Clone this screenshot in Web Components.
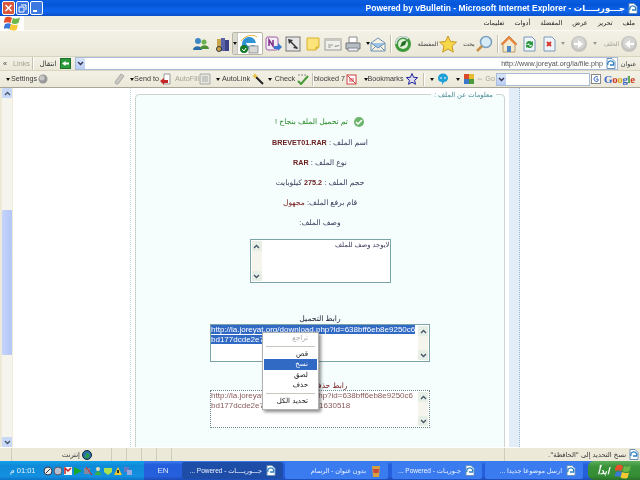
<!DOCTYPE html>
<html lang="ar">
<head>
<meta charset="utf-8">
<title>Powered by vBulletin</title>
<style>
  html, body { margin: 0; height: 100%; overflow: hidden; background: #ece9d8; }
  body { display: flex; flex-direction: column; width: 640px; height: 480px; filter: blur(.3px);
         font: 7.2px "Liberation Sans", "DejaVu Sans", sans-serif; color: #333; }
</style>
</head>
<body>
<win-title></win-title>
<menu-row></menu-row>

<tool-row h="25">
  <x-icon name="msn" size="18" style="margin-left:192px"></x-icon>
  <x-icon name="notes" size="16" style="margin-left:5px"></x-icon>
  <hot-button style="margin-left:1px"><x-icon name="iedit" size="20"></x-icon></hot-button>
  <x-icon name="onenote" size="18" style="margin-left:1px"></x-icon>
  <x-icon name="arrows" size="16" style="margin-left:3px"></x-icon>
  <x-icon name="sticky" size="16" style="margin-left:4px"></x-icon>
  <x-icon name="card" size="18" style="margin-left:3px"></x-icon>
  <x-icon name="printer" size="18" style="margin-left:2px"></x-icon>
  <drop-arrow style="margin-left:4px"></drop-arrow>
  <x-icon name="mail" size="16"></x-icon>
  <tool-sep h="18" style="margin-left:4px"></tool-sep>
  <x-icon name="compass" size="18" style="margin-left:2px"></x-icon>
  <tool-label w="20" style="margin-left:6px;font-size:6px">المفضلة</tool-label>
  <x-icon name="star" size="18" style="margin-left:1px"></x-icon>
  <tool-label w="12" style="margin-left:6px;font-size:6px">بحث</tool-label>
  <x-icon name="search" size="18"></x-icon>
  <tool-sep h="18" style="margin-left:4px"></tool-sep>
  <x-icon name="home" size="18" style="margin-left:1px"></x-icon>
  <x-icon name="refresh" size="16" style="margin-left:3px"></x-icon>
  <x-icon name="stop" size="16" style="margin-left:4px"></x-icon>
  <drop-arrow gray style="margin-left:4px"></drop-arrow>
  <x-icon name="forward" size="18" style="margin-left:5px"></x-icon>
  <drop-arrow gray style="margin-left:5px"></drop-arrow>
  <tool-label w="15" gray style="margin-left:7px;font-size:6px">الخلف</tool-label>
  <x-icon name="back" size="18" style="margin-left:1px"></x-icon>
</tool-row>

<tool-row h="14" line>
  <tool-label w="6" style="margin-left:2px">«</tool-label>
  <tool-label w="17" gray style="margin-left:5px">Links</tool-label>
  <tool-sep h="13" style="margin-left:2px"></tool-sep>
  <tool-label w="16" style="margin-left:6px">انتقال</tool-label>
  <x-icon name="go" size="11" style="margin-left:4px"></x-icon>
  <combo-box w="543" style="margin-left:4px"><span>http://www.joreyat.org/la/file.php</span><x-icon name="page" size="11" slot="end" style="margin-left:2px"></x-icon></combo-box>
  <tool-label w="15" style="margin-left:3px;font-size:6.400px">عنوان</tool-label>
</tool-row>

<tool-row h="17" line>
  <drop-arrow style="margin-left:6px"></drop-arrow>
  <tool-label w="24" style="margin-left:2px">Settings</tool-label>
  <x-icon name="ball" size="10" style="margin-left:2px"></x-icon>
  <x-icon name="eraser" size="12" style="margin-left:65px"></x-icon>
  <drop-arrow style="margin-left:5px"></drop-arrow>
  <tool-label w="23" style="margin-left:1px">Send to</tool-label>
  <x-icon name="sendto" size="12" style="margin-left:2px"></x-icon>
  <tool-label w="22" gray style="margin-left:4px">AutoFill</tool-label>
  <x-icon name="autofill" size="12" style="margin-left:1px"></x-icon>
  <drop-arrow style="margin-left:5px"></drop-arrow>
  <tool-label w="26" style="margin-left:3px">AutoLink</tool-label>
  <x-icon name="wand" size="12" style="margin-left:3px"></x-icon>
  <drop-arrow style="margin-left:4px"></drop-arrow>
  <tool-label w="20" style="margin-left:3px">Check</tool-label>
  <x-icon name="abc" size="12" style="margin-left:2px"></x-icon>
  <tool-sep h="13" style="margin-left:3px"></tool-sep>
  <tool-label w="27" style="margin-left:2px">blocked 7</tool-label>
  <x-icon name="blocked" size="11" style="margin-left:3px"></x-icon>
  <drop-arrow style="margin-left:7px"></drop-arrow>
  <tool-label w="33" style="margin-left:1px">Bookmarks</tool-label>
  <x-icon name="outline-star" size="12" style="margin-left:4px"></x-icon>
  <tool-sep h="13" style="margin-left:5px"></tool-sep>
  <drop-arrow style="margin-left:5px"></drop-arrow>
  <x-icon name="bubble" size="12" style="margin-left:3px"></x-icon>
  <drop-arrow style="margin-left:7px"></drop-arrow>
  <x-icon name="puzzle" size="12" style="margin-left:3px"></x-icon>
  <tool-label w="15" gray style="margin-left:3px">⇔ Go</tool-label>
  <combo-box w="94" style="margin-left:3px"></combo-box>
  <x-icon name="gbox" size="10" style="margin-left:1px"></x-icon>
  <google-mark style="margin-left:3px"></google-mark>
</tool-row>

<browser-page>
  <file-info></file-info>
  <context-menu></context-menu>
</browser-page>

<status-row></status-row>
<task-bar></task-bar>

<script>
const ICONS = {
  msn: '<circle cx="6" cy="6" r="3" fill="#3f87c4"/><path d="M1 15c0-5 9-5 9 0z" fill="#2a6ca8"/><circle cx="12" cy="7" r="2.5" fill="#6cb04c"/><path d="M8 14c0-5 9-5 9 0z" fill="#4c9036"/>',
  notes: '<rect x="2" y="3" width="4" height="12" fill="#c9a64e"/><rect x="6" y="2" width="4" height="13" fill="#5a63a8"/><rect x="10" y="4" width="4" height="11" fill="#3c4488"/><circle cx="4" cy="13" r="2.5" fill="none" stroke="#333"/>',
  iedit: '<path d="M3 11a7 7 0 0 1 14-2H7a3.500 3.500 0 0 0 6 2h3a7 7 0 0 1-13 0" fill="#2f93d6"/><path d="M2 7c4-6 13-7 16-4" fill="none" stroke="#f0b030" stroke-width="1"/><rect x="10" y="12" width="9" height="7" fill="#d8d8d8" stroke="#999"/><circle cx="5" cy="15" r="4" fill="#187a28"/><path d="M3 15l2 2 2-3" stroke="#fff" fill="none"/>',
  onenote: '<rect x="2" y="2" width="12" height="13" rx="2" fill="#f2ecf4" stroke="#a060a8"/><path d="M5 11V5l4 6V5" stroke="#80308a" stroke-width="1.500" fill="none"/><path d="M10 11h4V8l4 4-4 4v-2h-4z" fill="#3878d0"/>',
  arrows: '<rect x="1" y="1" width="14" height="14" fill="#e6e6e6" stroke="#777"/><path d="M3 3l5 1-1.500 1.500L13 12l-1 1-6.500-6.500L4 8z" fill="#333"/><path d="M13 13l-5-1 1.500-1.500z" fill="#333"/>',
  sticky: '<path d="M2 2h12v9l-3 3H2z" fill="#fce47a" stroke="#d8b030"/><path d="M11 14v-3h3" fill="#e8c84a" stroke="#d8b030"/>',
  card: '<rect x="1" y="4" width="16" height="11" fill="#f0f0ea" stroke="#999"/><rect x="1" y="4" width="16" height="2" fill="#c8c8c0"/><path d="M4 10h5M4 12h3" stroke="#999"/><path d="M11 12c1-3 2 1 4-2" stroke="#777" fill="none"/>',
  printer: '<path d="M5 2h8v6H5z" fill="#fff" stroke="#888"/><path d="M2 8h14v6H2z" fill="#b4bcc4" stroke="#777"/><path d="M4 13h10v3H4z" fill="#eef" stroke="#888"/>',
  mail: '<path d="M1 7l7-5 7 5v8H1z" fill="#f7f3e0" stroke="#6a90b8"/><path d="M1 7l7 5 7-5" fill="#9cc4e8" stroke="#6a90b8"/><path d="M1 15l5-5M15 15l-5-5" stroke="#6a90b8"/>',
  compass: '<circle cx="9" cy="9" r="8" fill="#3e9a3a"/><circle cx="9" cy="9" r="5" fill="#dff0d8"/><path d="M6 12l2-5 5-2-2 5z" fill="#246c24"/><path d="M2 9a7 7 0 0 1 12-5" fill="none" stroke="#dde" stroke-width="1.500"/>',
  star: '<path d="M9 1l2.500 5.500 6 .6-4.500 4 1.300 6L9 14l-5.300 3.100 1.300-6-4.500-4 6-.6z" fill="#f6d84a" stroke="#c89a20"/>',
  search: '<circle cx="11" cy="7" r="5.500" fill="#d8ecf8" stroke="#7aa0c0" stroke-width="1.500"/><path d="M7 11l-5 5" stroke="#c89048" stroke-width="2.500"/>',
  home: '<path d="M9 1L1 9l2 1v7h12v-7l2-1z" fill="#f4ead0" stroke="#b89868"/><path d="M9 1L1 9l2 1 6-6 6 6 2-1z" fill="#e8843c"/><rect x="7" y="11" width="4" height="6" fill="#4a88c8"/>',
  refresh: '<path d="M3 1h8l3 3v11H3z" fill="#eef4fa" stroke="#7a98b8"/><path d="M5 8a3.500 3.500 0 0 1 6-2l1-1v4H8l1-1a2 2 0 0 0-3 1zM12 9a3.500 3.500 0 0 1-6 2l-1 1V9h4l-1 1a2 2 0 0 0 3-1z" fill="#2c9a3c"/>',
  stop: '<path d="M3 1h8l3 3v11H3z" fill="#eef4fa" stroke="#7a98b8"/><path d="M6 6l4 4M10 6l-4 4" stroke="#d8342c" stroke-width="2"/>',
  forward: '<circle cx="9" cy="9" r="8" fill="#c4c4c0"/><circle cx="9" cy="8" r="6" fill="#d6d6d2"/><path d="M4 8h4V5l5 4-5 4v-3H4z" fill="#fff"/>',
  back: '<circle cx="9" cy="9" r="8" fill="#c4c4c0"/><circle cx="9" cy="8" r="6" fill="#d6d6d2"/><path d="M14 8h-4V5L5 9l5 4v-3h4z" fill="#fff"/>',
  go: '<rect x=".5" y=".5" width="10" height="10" fill="#2a9a3a" stroke="#1a7028"/><path d="M9 4.500H5.500V3L2 5.500 5.500 8V6.500H9z" fill="#fff"/>',
  page: '<path d="M2 .5h5l3 3v7H2z" fill="#fff" stroke="#6a90b8"/><path d="M3 7a3 3 0 1 1 5.500 0H5" fill="none" stroke="#2b7fc4" stroke-width="1.300"/>',
  ball: '<circle cx="5" cy="5" r="4.500" fill="#999"/><circle cx="4" cy="4" r="2.500" fill="#c8c8c8"/>',
  eraser: '<path d="M2 9l6-8 3 2-6 8H3z" fill="#c8c8c0" stroke="#aaa"/>',
  sendto: '<path d="M4 1h6v10H4z" fill="#fff" stroke="#999"/><path d="M0 8l4-3v2h4v3H4v2z" fill="#c42828"/>',
  autofill: '<path d="M1 1h10v10H1z" fill="#e6e6e0" stroke="#aaa"/><path d="M3 4h6M3 6h6M3 8h6" stroke="#aaa"/>',
  wand: '<path d="M4 4l7 7" stroke="#222" stroke-width="2"/><path d="M3 0l1 2 2 1-2 1-1 2-1-2-2-1 2-1z" fill="#e8c040"/>',
  abc: '<path d="M1 8l3 3 7-8" stroke="#4a9a3a" stroke-width="2" fill="none"/><path d="M1 2h9" stroke="#888" stroke-dasharray="2 1"/>',
  blocked: '<rect x="1" y="1" width="9" height="9" fill="#fff" stroke="#c44"/><path d="M1 1l9 9M3 5h5M3 7h5" stroke="#c44"/>',
  'outline-star': '<path d="M6 .5l1.600 3.800 4 .3-3 2.700.9 4L6 9.200 2.500 11.300l.9-4-3-2.700 4-.3z" fill="#dde" stroke="#22229a"/>',
  bubble: '<path d="M1 5a5 4.500 0 0 1 10 0c0 3-2.500 4-4 4L5 12V9C3 9 1 8 1 5z" fill="#1fa0d8"/><path d="M4 4v2M8 4v2" stroke="#fff"/>',
  puzzle: '<rect x="1" y="1" width="5" height="5" fill="#d84a2a"/><rect x="6" y="1" width="5" height="5" fill="#e8b830"/><rect x="1" y="6" width="5" height="5" fill="#3c78c8"/><rect x="6" y="6" width="5" height="5" fill="#4a9a3a"/>',
  gbox: '<rect x=".5" y=".5" width="9" height="9" fill="#fff" stroke="#888"/><path d="M7 3a2.500 2.500 0 1 0 0 4V5H5" fill="none" stroke="#3a6ac8"/>',
  check: '<circle cx="6" cy="6" r="5" fill="#6db56d"/><path d="M3 6l2 2 4-4" stroke="#fff" stroke-width="1.500" fill="none"/>',
  globe: '<circle cx="5" cy="5" r="4.500" fill="#2a70b0"/><path d="M2 3c3-1 3 2 1 3s1 3 3 2 2-4 0-5" fill="#2a9a48"/><circle cx="5" cy="5" r="4.500" fill="none" stroke="#123"/>',
  xp: '<path d="M1 3c3-2 5-1 7 0l-1.500 5c-2-1-4-1-7 0z" fill="#e8502c"/><path d="M9 3c2 1 4 1 7-.5L14.500 8c-3 1.500-5 1-7 0z" fill="#6cb84a"/><path d="M0 9c3-1 4-1 6 0l-1.500 5c-2-1-4-1-6 0z" fill="#3a78d8" transform="translate(1 0)"/><path d="M7 9c2 1 4 1.500 7 .5L12.500 15c-3 1-5 .5-7-.5z" fill="#f6c834"/>',
  paint: '<path d="M3 1h8l-1 11H4z" fill="#d4a040"/><path d="M4 4h6l-.5 4h-5z" fill="#c84a3a"/>',
  t1: '<circle cx="5" cy="5" r="4" fill="#e8e8e8" stroke="#334"/><path d="M3 7l4-4" stroke="#334"/>',
  t2: '<circle cx="5" cy="5" r="4" fill="#b8c0d0" stroke="#556"/>',
  t3: '<rect x="1" y="1" width="8" height="8" fill="#f4f4f4"/><path d="M2 8V2l3 3 3-3" stroke="#c22" stroke-width="1.500" fill="none"/>',
  t4: '<path d="M1 1l8 4-8 4z" fill="#18a828"/>',
  t5: '<rect x="1" y="2" width="6" height="6" fill="#889" /><path d="M3 1l6 8" stroke="#c22"/>',
  t6: '<circle cx="5" cy="3" r="2" fill="#e8e0b0"/><path d="M2 9c0-5 6-5 6 0z" fill="#38b048"/>',
  t7: '<path d="M1 2h8v4l-4 3-4-3z" fill="#a8e050"/>',
  t8: '<path d="M5 1l4 8H1z" fill="#f0c830"/><rect x="4" y="4" width="2" height="3" fill="#333"/>',
  t9: '<rect x="1" y="1" width="5" height="5" fill="#6878c0"/><rect x="4" y="4" width="5" height="5" fill="#98a8e0"/>'
};

// every element below: same little pattern, markup and style set in the constructor
class BaseEl extends HTMLElement {
  constructor() {
    super();
    this.attachShadow({mode: "open"});
  }
  _render(css, html) {
    this.shadowRoot.innerHTML = `<style>${css}</style>${html}`;
  }
}

customElements.define("x-icon", class extends BaseEl {
  connectedCallback() {
    const s = Number(this.getAttribute("size") || 16);
    const n = this.getAttribute("name");
    this._render(`:host{display:block;flex:none;width:${s}px;height:${s}px} svg{display:block}`,
      `<svg width="${s}" height="${s}" viewBox="0 0 ${s} ${s}">${ICONS[n] || ""}</svg>`);
  }
});

customElements.define("win-title", class extends BaseEl {
  constructor() {
    super();
    this._render(`
      :host{display:flex;flex:none;height:16px;align-items:center;gap:1px;padding:0 2px;
        background:linear-gradient(#0a5fe0,#0655d8 30%,#0e66ee 70%,#0a50c8);color:#fff}
      .t{margin-left:auto;font:bold 8.450px "Liberation Sans","DejaVu Sans",sans-serif;white-space:nowrap;direction:ltr}
      .b{width:13px;height:14px;box-sizing:border-box;border:1px solid #fff;border-radius:2px;background:#3c78e0}
      .x{background:#d9573a}
      svg{display:block}
      .i{margin:0 0 0 1px}`,
      `<div class="b x"><svg width="11" height="12"><path d="M2.500 3l6 6M8.500 3l-6 6" stroke="#fff" stroke-width="1.600"/></svg></div>
       <div class="b"><svg width="11" height="12"><path d="M2 5h5v5H2zM4 3h5v5" fill="none" stroke="#fff"/></svg></div>
       <div class="b"><svg width="11" height="12"><path d="M2 9h4" stroke="#fff" stroke-width="2"/></svg></div>
       <div class="t">Powered by vBulletin - Microsoft Internet Explorer - جـــوريــــات</div>
       <x-icon class="i" name="page" size="11"></x-icon>`);
  }
});

customElements.define("menu-row", class extends BaseEl {
  constructor() {
    super();
    this._render(`
      :host{display:flex;flex:none;height:15px;align-items:center;background:#f0eee0;border-bottom:1px solid #fbfaf4;box-sizing:border-box;
        font:6.500px "DejaVu Sans",sans-serif;color:#222}
      .l{width:24px;height:15px;background:#fff;display:flex;align-items:center;justify-content:center}
      nav{margin-left:auto;display:flex;gap:10px;padding-right:5px;direction:rtl}`,
      `<div class="l"><x-icon name="xp" size="16"></x-icon></div>
       <nav><span>ملف</span><span>تحرير</span><span>عرض</span><span>المفضلة</span><span>أدوات</span><span>تعليمات</span></nav>`);
  }
});

customElements.define("tool-row", class extends BaseEl {
  connectedCallback() {
    const h = this.getAttribute("h");
    const line = this.hasAttribute("line") ? "border-top:1px solid #d8d4c0;" : "";
    this._render(`:host{display:flex;flex:none;height:${h}px;box-sizing:border-box;align-items:center;${line}
        background:linear-gradient(#f3f1e6,#ebe8d8);color:#333}`, `<slot></slot>`);
  }
});

customElements.define("tool-sep", class extends BaseEl {
  connectedCallback() {
    this._render(`:host{display:block;flex:none;width:1px;height:${this.getAttribute("h")}px;background:#c5c2b0;border-right:1px solid #fff}`, "");
  }
});

customElements.define("tool-label", class extends BaseEl {
  connectedCallback() {
    const c = this.hasAttribute("gray") ? "#a4a294" : "#3a3a3a";
    this._render(`:host{display:flex;flex:none;justify-content:center;width:${this.getAttribute("w")}px;color:${c};white-space:nowrap;font-size:7.200px;line-height:12px}`, `<slot></slot>`);
  }
});

customElements.define("drop-arrow", class extends BaseEl {
  connectedCallback() {
    const c = this.hasAttribute("gray") ? "#999" : "#111";
    this._render(`:host{display:block;flex:none;width:0;height:0;border:2px solid transparent;border-top:3px solid ${c};border-bottom:0}`, "");
  }
});

customElements.define("hot-button", class extends BaseEl {
  constructor() {
    super();
    this._render(`
      :host{display:flex;flex:none;width:31px;height:23px;box-sizing:border-box;border:1px solid #b8b8a8;border-radius:2px;background:#fff;align-items:center;padding-right:4px}
      .a{width:7px;height:21px;background:#dcdad0;border-right:1px solid #c8c6b8;display:flex;align-items:center;justify-content:center;margin-right:1px}`,
      `<div class="a"><drop-arrow></drop-arrow></div><slot></slot>`);
  }
});

customElements.define("combo-box", class extends BaseEl {
  connectedCallback() {
    this._render(`
      :host{display:flex;flex:none;width:${this.getAttribute("w")}px;height:13px;box-sizing:border-box;background:#fff;border:1px solid #a8bcd8;align-items:center;padding-right:1px;color:#555;font-size:7.200px}
      .d{width:9px;height:11px;background:linear-gradient(#d8e4fa,#b8ccf4);display:flex;align-items:center;justify-content:center;margin-right:auto}`,
      `<div class="d"><svg width="7" height="5"><path d="M1 1l2.500 2.500L6 1" fill="none" stroke="#335" stroke-width="1.400"/></svg></div>
       <slot></slot><slot name="end"></slot>`);
  }
});

customElements.define("google-mark", class extends BaseEl {
  constructor() {
    super();
    this._render(`:host{display:block;flex:none;font:bold 11px "Liberation Serif",serif;letter-spacing:-.4px;line-height:14px}
      .b{color:#3a62c8}.r{color:#d03a2a}.y{color:#d8a820}.g{color:#3a9a3a}`,
      `<span class="b">G</span><span class="r">o</span><span class="y">o</span><span class="b">g</span><span class="g">l</span><span class="r">e</span>`);
  }
});

customElements.define("scroll-bar", class extends BaseEl {
  connectedCallback() {
    const w = this.getAttribute("w") || 10;
    const up = this.getAttribute("top") || 0;
    const th = this.getAttribute("thumb") || 0;
    const btn = this.getAttribute("btn") || "#c8d8f8";
    const thumb = th ? `<div class="th" style="margin-top:${up}px;height:${th}px"></div>` : "";
    this._render(`
      :host{display:flex;flex-direction:column;flex:none;width:${w}px;background:#f5f5ee;box-sizing:border-box}
      .b{flex:none;height:${w}px;background:${btn};display:flex;align-items:center;justify-content:center;border-radius:1px}
      .m{flex:1;min-height:0}
      .th{background:linear-gradient(90deg,#c6d4fb,#b4c6f8);border-radius:1px}
      svg{display:block}`,
      `<div class="b"><svg width="7" height="5"><path d="M1 4l2.500-2.500L6 4" fill="none" stroke="#456" stroke-width="1.300"/></svg></div>
       <div class="m">${thumb}</div>
       <div class="b"><svg width="7" height="5"><path d="M1 1l2.500 2.500L6 1" fill="none" stroke="#456" stroke-width="1.300"/></svg></div>`);
  }
});

customElements.define("browser-page", class extends BaseEl {
  constructor() {
    super();
    this._render(`
      :host{display:flex;flex:none;height:360px;position:relative;overflow:hidden;background:#fff;
        border-top:1px solid #a8a598;box-sizing:border-box}
      .edge{flex:none;width:2px;background:#ece9d8}
      scroll-bar{border-right:1px solid #f0ecd8;width:11px}
      .main{flex:1;display:flex;min-width:0;padding-left:117px}`,
      `<div class="edge"></div><scroll-bar w="10" top="112" thumb="145"></scroll-bar>
       <div class="main"><slot></slot></div>`);
  }
});

customElements.define("text-box", class extends BaseEl {
  connectedCallback() {
    const w = this.getAttribute("w");
    const h = this.getAttribute("h");
    const dotted = this.hasAttribute("dotted");
    const left = this.getAttribute("bar") === "left";
    const bd = dotted ? "1px dotted #6a8a8a" : "1px solid #7aa4a8";
    this._render(`
      :host{display:flex;direction:ltr;flex-direction:${left ? "row" : "row-reverse"};width:${w}px;height:${h}px;box-sizing:border-box;border:${bd};background:#fff;margin:0 auto;overflow:hidden}
      .c{flex:1;min-width:0;white-space:nowrap;overflow:hidden;line-height:10px;font-family:"Liberation Sans","DejaVu Sans",sans-serif;font-size:${left ? 6.8 : 8}px;text-align:${left ? "right" : "left"};direction:${left ? "rtl" : "ltr"}}
      scroll-bar{margin:1px}`,
      `<scroll-bar w="10" btn="#e6eee6"></scroll-bar><div class="c"><slot></slot></div>`);
  }
});

customElements.define("file-info", class extends BaseEl {
  constructor() {
    super();
    this._render(`
      :host{display:flex;flex:none;width:391px;font:7.600px "Liberation Sans","DejaVu Sans",sans-serif;color:#3a3a5a}
      .stripe{flex:none;width:2px;box-sizing:border-box;margin-right:3px;border-left:1px dotted #c4d8e4}
      fieldset{flex:none;width:370px;height:400px;margin:0;padding:0;box-sizing:border-box;background:#f5fdfd;border:1px solid #ccd4d0;border-radius:4px;text-align:center;direction:rtl;min-inline-size:0}
      legend{padding:0 3px;margin-right:8px;color:#4f8b96;font-size:6.800px;line-height:13px;text-align:right}
      .band{flex:none;width:10px;margin-left:4px;background:#e3edf8;border-right:1px dotted #9cb8d4}
      p{margin:0;height:20px;line-height:20px;white-space:nowrap}
      .ok{color:#2a8a2a;display:flex;justify-content:center;align-items:center;gap:5px;margin-top:10px;height:22px}
      b{color:#6b2020;font-size:7.200px}
      .red{color:#7a2020}
      .lab{height:12px;line-height:12px;color:#223}
      .box1{margin-top:6px}
      .lab1{margin-top:30px}
      .box2{margin-top:-1px}
      .lab2{margin-top:18px;color:#7a2020}
      .box3{margin-top:-2px}
      .sel{background:#316ac5;color:#fff}
      .url{color:#8a5a5a}`,
      `<div class="stripe"></div>
       <fieldset>
         <legend>معلومات عن الملف :</legend>
         <p class="ok"><x-icon name="check" size="12"></x-icon><span>تم تحميل الملف بنجاح !</span></p>
         <p><span>اسم الملف : <b dir="ltr">BREVET01.RAR</b></span></p>
         <p><span>نوع الملف : <b>RAR</b></span></p>
         <p><span>حجم الملف : <b>275.2</b> كيلوبايت</span></p>
         <p><span>قام برفع الملف: <span class="red">مجهول</span></span></p>
         <p><span>وصف الملف:</span></p>
         <text-box class="box1" w="141" h="44" bar="left">لايوجد وصف للملف</text-box>
         <p class="lab lab1">رابط التحميل</p>
         <text-box class="box2" w="220" h="38">
           <span class="sel">http://la.joreyat.org/download.php?id=638bff6eb8e9250c6</span><br>
           <span class="sel">bd177dcde2e7</span>
         </text-box>
         <p class="lab lab2">رابط حذف الملف</p>
         <text-box class="box3" dotted w="220" h="38">
           <span class="url">http://la.joreyat.org/deletefile.php?id=638bff6eb8e9250c6</span><br>
           <span class="url">bd177dcde2e7a04c6f9d2e7b31630518</span>
         </text-box>
       </fieldset>
       <div class="band"></div>`);
  }
});

customElements.define("context-menu", class extends BaseEl {
  constructor() {
    super();
    this._render(`
      :host{position:absolute;left:262px;top:244px;width:57px;height:78px;box-sizing:border-box;background:#fff;border:1px solid #b0b0b0;
        box-shadow:2px 2px 3px rgba(0,0,0,.45);padding:1px;font:7px "DejaVu Sans",sans-serif;color:#111;direction:rtl}
      div{height:9px;line-height:9px;padding:0 9px 0 0;text-align:right}
      .g{color:#aaa}
      .sep{height:1px;background:#c8c6bc;margin:3px 2px;padding:0}
      .a{height:10px;line-height:10px}
      .on{background:#316ac5;color:#fff;height:11px;line-height:11px}`,
      `<div class="g">تراجع</div><div class="sep"></div>
       <div>قص</div><div class="on">نسخ</div><div class="a">لصق</div><div class="a">حذف</div>
       <div class="sep"></div><div>تحديد الكل</div>`);
  }
});

customElements.define("status-row", class extends BaseEl {
  constructor() {
    super();
    this._render(`
      :host{display:flex;flex:none;height:14px;box-sizing:border-box;background:#ece9d8;border-top:1px solid #fff;font:6.700px "DejaVu Sans",sans-serif;color:#333;align-items:stretch}
      .c{border-right:1px solid #d0cdb8;box-sizing:border-box;flex:none;display:flex;align-items:center}
      .in{width:100px;gap:2px;padding-left:50px}
      .grow{flex:1;justify-content:flex-end;gap:2px;padding-right:1px;border:0}`,
      `<div class="c" style="width:12px"></div>
       <div class="c in"><span>إنترنت</span><x-icon name="globe" size="10"></x-icon></div>
       <div class="c" style="width:15px"></div><div class="c" style="width:15px"></div>
       <div class="c" style="width:15px"></div><div class="c" style="width:15px"></div>
       <div class="c" style="width:333px"></div>
       <div class="c grow"><span dir="rtl">نسخ التحديد إلى "الحافظة".</span><x-icon name="page" size="11"></x-icon></div>`);
  }
});

customElements.define("task-bar", class extends BaseEl {
  constructor() {
    super();
    const tray = ["t1","t2","t3","t4","t5","t6","t7","t8","t9"];
    this._render(`
      :host{display:flex;flex:none;height:19px;background:linear-gradient(#3c7fef,#245ddb 20%,#2760dc 80%,#1c4cb8);color:#fff;font:6.500px "Liberation Sans","DejaVu Sans",sans-serif;align-items:stretch}
      .tray{flex:none;width:144px;box-sizing:border-box;background:linear-gradient(#16a0ea,#0e8ad8 25%,#1490e0 80%,#0b74c8);display:flex;align-items:center;padding-left:10px}
      .clock{font:7.500px "Liberation Sans","DejaVu Sans",sans-serif;width:33px;white-space:nowrap;color:#e8f4ff;text-align:left}
      .ic{display:flex}
      .en{flex:none;width:38px;text-align:center;font:8px/19px "Liberation Sans",sans-serif;color:#dfe9ff}
      .task{flex:none;box-sizing:border-box;display:flex;align-items:center;justify-content:flex-end;gap:3px;margin:1px 0;padding-right:7px;background:#3a7bf0;border-radius:2px;white-space:nowrap;overflow:hidden;color:#eef4ff}
      .on{background:#1e4da8}
      .start{flex:none;width:52px;margin-left:auto;background:linear-gradient(#5cb05c,#3a923a 30%,#348c34 80%,#2a702a);display:flex;align-items:center;justify-content:center;gap:5px;border-radius:6px 0 0 6px;font:italic bold 9px "DejaVu Sans",sans-serif}`,
      `<div class="tray"><span class="clock" dir="rtl">01:01 م</span>
         <div class="ic">${tray.map(n => `<x-icon name="${n}" size="10"></x-icon>`).join("")}</div></div>
       <div class="en">EN</div>
       <div class="task on" style="width:101px"><span>... Powered - جـــوريــــات</span><x-icon name="page" size="11"></x-icon></div>
       <div class="task" style="width:103px;margin-left:2px"><span>بدون عنوان - الرسام</span><x-icon name="paint" size="12"></x-icon></div>
       <div class="task" style="width:90px;margin-left:4px"><span>... Powered - جـوريـات</span><x-icon name="page" size="11"></x-icon></div>
       <div class="task" style="width:98px;margin-left:3px"><span dir="rtl">ارسل موضوعا جديدا ...</span><x-icon name="page" size="11"></x-icon></div>
       <div class="start"><span>ابدأ</span><x-icon name="xp" size="16"></x-icon></div>`);
  }
});
</script>
</body>
</html>
